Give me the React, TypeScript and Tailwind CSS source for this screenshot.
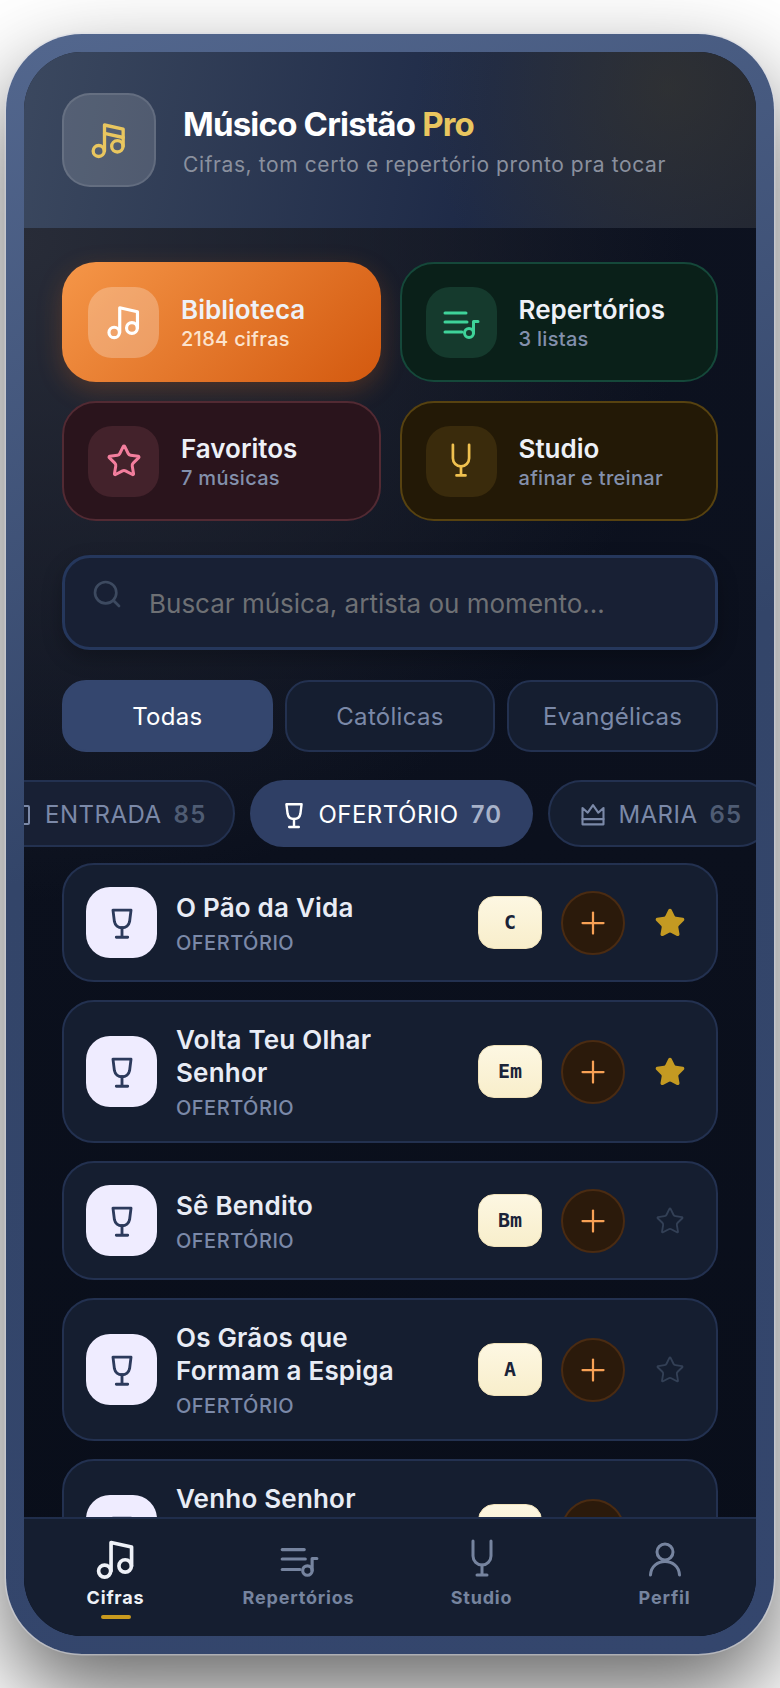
import { Plus, Search, Star } from "lucide-react"

type IconProps = { className?: string }

const NoteIcon = ({ className, doubleBar }: IconProps & { doubleBar?: boolean }) => (
    <svg viewBox="0 0 24 24" fill="none" stroke="currentColor" strokeWidth="2" strokeLinecap="round" strokeLinejoin="round" className={className}>
        <path d="M9.3 18.6V3l11.2 2.5v10.3" />
        {doubleBar && <path d="M9.3 8l11.2 2.5" />}
        <circle cx="5.8" cy="18.6" r="3.3" />
        <circle cx="17" cy="15.8" r="3.4" />
    </svg>
)

const ListNoteIcon = ({ className }: IconProps) => (
    <svg viewBox="0 0 40 40" fill="none" stroke="currentColor" strokeWidth="3" strokeLinecap="round" strokeLinejoin="round" className={className}>
        <path d="M4 11h21M4 20h22M4 30h17" />
        <circle cx="28" cy="31" r="4.5" />
        <path d="M32.5 31V19.5h4.5" />
    </svg>
)

const ForkIcon = ({ className }: IconProps) => (
    <svg viewBox="0 0 40 40" fill="none" stroke="currentColor" strokeWidth="3" strokeLinecap="round" strokeLinejoin="round" className={className}>
        <path d="M11 2v15a9 9 0 0 0 18 0V2" />
        <path d="M20 26v10M15 36h10" />
    </svg>
)

const PersonIcon = ({ className }: IconProps) => (
    <svg viewBox="0 0 40 40" fill="none" stroke="currentColor" strokeWidth="3" strokeLinecap="round" strokeLinejoin="round" className={className}>
        <circle cx="20" cy="13" r="8" />
        <path d="M5.5 36C6 27 13 22.5 20 22.5S34 27 34.5 36" />
    </svg>
)

const GobletIcon = ({ className }: IconProps) => (
    <svg viewBox="0 0 40 40" fill="none" stroke="currentColor" strokeWidth="3" strokeLinecap="round" strokeLinejoin="round" className={className}>
        <path d="M10.5 6.5h19L28 18.5c-.7 4-4 6.5-8 6.5s-7.3-2.5-8-6.5z" />
        <path d="M20 25v10M14 35h12" />
    </svg>
)

const CrownIcon = ({ className }: IconProps) => (
    <svg viewBox="0 0 24 24" fill="none" stroke="currentColor" strokeWidth="1.8" strokeLinecap="round" strokeLinejoin="round" className={className}>
        <path d="M3 6l4.5 4L12 3.5l4.5 6.5L21 6v9.5H3z" />
        <path d="M3 15.5V20h18v-4.5" />
    </svg>
)

const DoorIcon = ({ className }: IconProps) => (
    <svg viewBox="0 0 24 24" fill="none" stroke="currentColor" strokeWidth="2" strokeLinecap="round" strokeLinejoin="round" className={className}>
        <rect x="3" y="3" width="18" height="18" rx="1" />
    </svg>
)

const shortcuts = [
    { title: "Biblioteca", sub: "2184 cifras", card: "bg-[linear-gradient(135deg,#f59648,#d3590f)] pl-[26px] shadow-[0_8px_26px_rgba(249,115,22,0.22)]", tile: "bg-white/25", subColor: "text-[#fce3cd]", icon: <NoteIcon className="size-[38px] text-white" /> },
    { title: "Repertórios", sub: "3 listas", card: "border-2 border-[#15483a] bg-[#0a2019] pl-[24px]", tile: "bg-[#153a2d]", subColor: "text-[#8390ac]", icon: <ListNoteIcon className="size-[40px] text-[#3fd39a]" /> },
    { title: "Favoritos", sub: "7 músicas", card: "border-2 border-[#522a33] bg-[#2a141c] pl-[24px]", tile: "bg-[#43222b]", subColor: "text-[#8390ac]", icon: <Star className="size-[36px] text-[#f37e9d]" strokeWidth={2} /> },
    { title: "Studio", sub: "afinar e treinar", card: "border-2 border-[#574210] bg-[#231906] pl-[24px]", tile: "bg-[#3a2b0c]", subColor: "text-[#8390ac]", icon: <ForkIcon className="size-[36px] text-[#f0c14f]" /> },
]

const songs = [
    { title: "O Pão da Vida", key: "C", fav: true },
    { title: "Volta Teu Olhar Senhor", key: "Em", fav: true },
    { title: "Sê Bendito", key: "Bm", fav: false },
    { title: "Os Grãos que Formam a Espiga", key: "A", fav: false },
    { title: "Venho Senhor Minha Vida", key: "D", fav: false },
]

const navItems = [
    { label: "Cifras", active: true, icon: <NoteIcon className="size-[44px]" /> },
    { label: "Repertórios", active: false, icon: <ListNoteIcon className="size-[42px]" /> },
    { label: "Studio", active: false, icon: <ForkIcon className="size-[40px]" /> },
    { label: "Perfil", active: false, icon: <PersonIcon className="size-[40px]" /> },
]

const App = () => {
    return (
        <div className="h-[1688px] w-[780px] overflow-hidden bg-white px-[6px] pt-[34px] font-['Inter',sans-serif]">
            <div className="h-[1620px] w-[768px] rounded-[76px] bg-[linear-gradient(160deg,#53678e,#334569_45%,#34466d)] p-[18px] shadow-[0_0_0_1.5px_rgba(215,218,228,0.5),0_40px_90px_rgba(0,0,0,0.6)]">
                <div className="flex h-full flex-col overflow-hidden rounded-[58px] bg-[radial-gradient(circle_at_0%_12%,#282c38,transparent_42%),linear-gradient(180deg,#0d1220,#090e1a)]">
                    <header className="flex h-[176px] shrink-0 items-start gap-[27px] bg-[radial-gradient(circle_at_88%_20%,rgba(62,58,44,0.5),transparent_38%),linear-gradient(100deg,#3b485f,#1e2a47_62%,#1e2434)] px-[38px] pt-[41px]">
                        <div className="flex size-[94px] shrink-0 items-center justify-center rounded-[28px] border-2 border-white/10 bg-white/15">
                            <NoteIcon doubleBar className="size-[40px] text-[#e9c65f]" />
                        </div>
                        <div className="pt-[11px]">
                            <div className="text-[33px] leading-[40px] font-bold tracking-[-0.8px] text-white">
                                Músico Cristão <span className="text-[#e9c65f]">Pro</span>
                            </div>
                            <div className="mt-[7px] text-[21px] leading-[28px] tracking-[0.6px] text-[#8a909e]">Cifras, tom certo e repertório pronto pra tocar</div>
                        </div>
                    </header>

                    <main className="min-h-0 flex-1 overflow-hidden px-[38px] pt-[34px]">
                        <div className="grid grid-cols-2 gap-x-[19px] gap-y-[19px]">
                            {shortcuts.map((s) => (
                                <div key={s.title} className={`flex h-[120px] items-center gap-[22px] rounded-[34px] ${s.card}`}>
                                    <div className={`flex size-[71px] items-center justify-center rounded-[24px] ${s.tile}`}>{s.icon}</div>
                                    <div className="pt-[2px]">
                                        <div className="text-[26px] leading-[32px] font-semibold text-[#eef1f7]">{s.title}</div>
                                        <div className={`text-[20px] leading-[26px] font-medium tracking-[0.3px] ${s.subColor}`}>{s.sub}</div>
                                    </div>
                                </div>
                            ))}
                        </div>

                        <div className="relative mt-[34px]">
                            <Search className="absolute top-[23px] left-[29px] size-[32px] text-[#3d4a60]" strokeWidth={2} />
                            <input
                                readOnly
                                placeholder="Buscar música, artista ou momento..."
                                className="h-[95px] w-full rounded-[28px] border-[3px] border-[#25375c] bg-[#182034] pt-[2px] pl-[84px] text-[26px] shadow-[0_8px_20px_rgba(0,0,0,0.25)] outline-none placeholder:text-[#6e7074]"
                            />
                        </div>

                        <div className="mt-[30px] flex gap-[12px]">
                            <div className="flex h-[72px] flex-1 items-center justify-center rounded-[24px] border-2 border-[#34466e] bg-[#34466e] pt-[2px] text-[24px] tracking-[0.3px] text-white">Todas</div>
                            <div className="flex h-[72px] flex-1 items-center justify-center rounded-[24px] border-2 border-[#233150] bg-[#151e30] pt-[2px] text-[24px] tracking-[0.3px] text-[#7b89a8]">Católicas</div>
                            <div className="flex h-[72px] flex-1 items-center justify-center rounded-[24px] border-2 border-[#233150] bg-[#151e30] pt-[2px] text-[24px] tracking-[0.3px] text-[#7b89a8]">Evangélicas</div>
                        </div>

                        <div className="-mx-[38px] mt-[28px] overflow-hidden">
                            <div className="-ml-[48px] flex gap-[15px]">
                                <div className="flex h-[67px] shrink-0 items-center gap-[12px] rounded-full border-2 border-[#233150] bg-[#182034] pt-[2px] pr-[27px] pl-[30px] text-[24px] tracking-[0.5px] text-[#7b89a8]">
                                    <DoorIcon className="mr-[1px] size-[24px]" />
                                    <span>ENTRADA</span>
                                    <span className="font-semibold tracking-[1.2px] text-[#4f5c73]">85</span>
                                </div>
                                <div className="flex h-[67px] shrink-0 items-center gap-[12px] rounded-full bg-[#2f3f65] pt-[2px] pr-[31px] pl-[28px] text-[24px] tracking-[0.5px] text-white">
                                    <GobletIcon className="-mr-[4px] size-[32px]" />
                                    <span>OFERTÓRIO</span>
                                    <span className="font-semibold tracking-[1.2px] text-[#a7b2c9]">70</span>
                                </div>
                                <div className="flex h-[67px] shrink-0 items-center gap-[12px] rounded-full border-2 border-[#233150] bg-[#151e30] pt-[2px] pr-[28px] pl-[29px] text-[24px] tracking-[0.5px] text-[#7b89a8]">
                                    <CrownIcon className="-mr-[1px] size-[28px]" />
                                    <span>MARIA</span>
                                    <span className="font-semibold tracking-[1.2px] text-[#4f5c73]">65</span>
                                </div>
                            </div>
                        </div>

                        <div className="mt-[16px] flex flex-col gap-[18px]">
                            {songs.map((song) => (
                                <div key={song.title} className="flex min-h-[119px] shrink-0 items-center rounded-[32px] border-2 border-[#233150] bg-[#151e30] py-[21px] pr-[15px] pl-[22px]">
                                    <div className="flex size-[71px] shrink-0 items-center justify-center rounded-[24px] bg-[#efecff]">
                                        <GobletIcon className="size-[38px] text-[#2c3a5c]" />
                                    </div>
                                    <div className="ml-[19px] min-w-0 flex-1 pr-[41px]">
                                        <div className="text-[26px] leading-[33px] font-semibold tracking-[0.2px] text-[#e8ecf5]">{song.title}</div>
                                        <div className="mt-[7px] text-[20px] leading-[24px] font-medium tracking-[0.5px] text-[#7b89a8]">OFERTÓRIO</div>
                                    </div>
                                    <div className="flex h-[53px] w-[64px] shrink-0 items-center justify-center rounded-[16px] border border-[#f0e2ba] bg-[linear-gradient(180deg,#fdf7e2,#f8eecb)] pb-[2px] font-['DejaVu_Sans_Mono',monospace] text-[20px] font-bold text-[#1a2338]">
                                        {song.key}
                                    </div>
                                    <div className="ml-[19px] flex size-[64px] shrink-0 items-center justify-center rounded-full border-2 border-[#4a2b12] bg-[#2b1a0b]">
                                        <Plus className="size-[36px] text-[#f8a155]" strokeWidth={1.5} />
                                    </div>
                                    <div className="ml-[14px] flex w-[62px] shrink-0 justify-center">
                                        {song.fav ? (
                                            <Star className="size-[32px] fill-[#c49a22] text-[#c49a22]" strokeWidth={1.5} />
                                        ) : (
                                            <Star className="size-[30px] text-[#334056]" strokeWidth={1.5} />
                                        )}
                                    </div>
                                </div>
                            ))}
                        </div>
                    </main>

                    <nav className="grid h-[119px] shrink-0 grid-cols-4 border-t-2 border-[#202e4c] bg-[#151e30] pt-[18px]">
                        {navItems.map((item) => (
                            <div key={item.label} className={`flex flex-col items-center ${item.active ? "text-[#eef1f7]" : "text-[#76849f]"}`}>
                                <div className="flex h-[44px] items-center">{item.icon}</div>
                                <div className="mt-[5px] text-[18px] leading-[24px] font-bold tracking-[0.8px]">{item.label}</div>
                                {item.active && <div className="mt-[5px] h-[4px] w-[30px] rounded-full bg-[#c99a1e]" />}
                            </div>
                        ))}
                    </nav>
                </div>
            </div>
        </div>
    )
}

export default App
